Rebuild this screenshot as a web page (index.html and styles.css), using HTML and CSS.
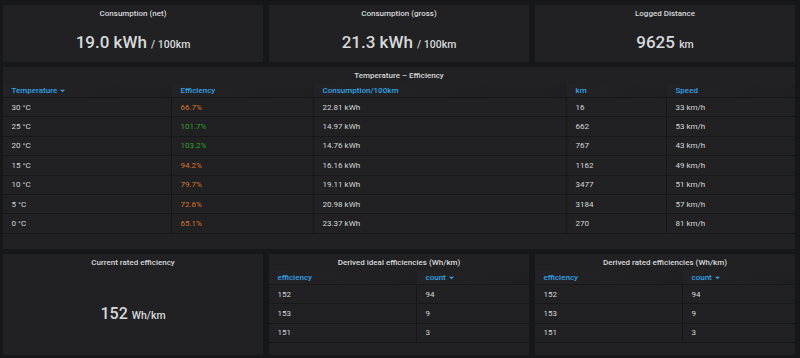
FILE: index.html
```html
<!DOCTYPE html>
<html lang="en">
<head>
<meta charset="UTF-8" />
<meta name="viewport" content="width=device-width, initial-scale=1" />
<title>Efficiency</title>
<link rel="stylesheet" href="styles.css">
</head>
<body>
  <div class="dashboard">

    <div class="panel stat-panel">
      <div class="panel-title">Consumption (net)</div>
      <div class="stat-value"><span>19.0 kWh <span class="stat-unit">/ 100km</span></span></div>
    </div>

    <div class="panel stat-panel">
      <div class="panel-title">Consumption (gross)</div>
      <div class="stat-value"><span>21.3 kWh <span class="stat-unit">/ 100km</span></span></div>
    </div>

    <div class="panel stat-panel">
      <div class="panel-title">Logged Distance</div>
      <div class="stat-value"><span>9625 <span class="stat-unit">km</span></span></div>
    </div>

    <div class="panel table-panel wide">
      <div class="panel-title">Temperature – Efficiency</div>
      <table class="data-table temp-table">
        <colgroup>
          <col style="width: 169px">
          <col style="width: 142px">
          <col style="width: 253px">
          <col style="width: 100px">
          <col>
        </colgroup>
        <thead>
          <tr>
            <th>Temperature <svg class="caret" viewBox="0 0 6 4"><path d="M0 0.5h6L3 3.5z"/></svg></th>
            <th>Efficiency</th>
            <th>Consumption/100km</th>
            <th>km</th>
            <th>Speed</th>
          </tr>
        </thead>
        <tbody>
          <tr><td>30 °C</td><td class="warn">66.7%</td><td>22.81 kWh</td><td>16</td><td>33 km/h</td></tr>
          <tr><td>25 °C</td><td class="ok">101.7%</td><td>14.97 kWh</td><td>662</td><td>53 km/h</td></tr>
          <tr><td>20 °C</td><td class="ok">103.2%</td><td>14.76 kWh</td><td>767</td><td>43 km/h</td></tr>
          <tr><td>15 °C</td><td class="warn">94.2%</td><td>16.16 kWh</td><td>1162</td><td>49 km/h</td></tr>
          <tr><td>10 °C</td><td class="warn">79.7%</td><td>19.11 kWh</td><td>3477</td><td>51 km/h</td></tr>
          <tr><td>5 °C</td><td class="warn">72.6%</td><td>20.98 kWh</td><td>3184</td><td>57 km/h</td></tr>
          <tr><td>0 °C</td><td class="warn">65.1%</td><td>23.37 kWh</td><td>270</td><td>81 km/h</td></tr>
        </tbody>
      </table>
    </div>

    <div class="panel stat-panel">
      <div class="panel-title">Current rated efficiency</div>
      <div class="stat-value small"><span>152 <span class="stat-unit">Wh/km</span></span></div>
    </div>

    <div class="panel table-panel">
      <div class="panel-title">Derived ideal efficiencies (Wh/km)</div>
      <table class="data-table">
        <colgroup>
          <col style="width: 148px">
          <col>
        </colgroup>
        <thead>
          <tr>
            <th>efficiency</th>
            <th>count <svg class="caret" viewBox="0 0 6 4"><path d="M0 0.5h6L3 3.5z"/></svg></th>
          </tr>
        </thead>
        <tbody>
          <tr><td>152</td><td>94</td></tr>
          <tr><td>153</td><td>9</td></tr>
          <tr><td>151</td><td>3</td></tr>
        </tbody>
      </table>
    </div>

    <div class="panel table-panel">
      <div class="panel-title">Derived rated efficiencies (Wh/km)</div>
      <table class="data-table">
        <colgroup>
          <col style="width: 148px">
          <col>
        </colgroup>
        <thead>
          <tr>
            <th>efficiency</th>
            <th>count <svg class="caret" viewBox="0 0 6 4"><path d="M0 0.5h6L3 3.5z"/></svg></th>
          </tr>
        </thead>
        <tbody>
          <tr><td>152</td><td>94</td></tr>
          <tr><td>153</td><td>9</td></tr>
          <tr><td>151</td><td>3</td></tr>
        </tbody>
      </table>
    </div>

  </div>
</body>
</html>
```

FILE: styles.css
```css
body {
  background-color: #161719;
  color: #d8d9da;
  font-family: Roboto, 'Liberation Sans', sans-serif;
  margin: 0;
  padding: 5px 5px 0 3px;
}
.dashboard {
  display: grid;
  grid-template-columns: repeat(3, 1fr);
  grid-template-rows: 57px 182px 101px;
  column-gap: 6px;
  row-gap: 5px;
}
.panel {
  background-color: #212124;
  display: flex;
  flex-direction: column;
  overflow: hidden;
}
.wide {
  grid-column: 1 / 4;
}
.panel-title {
  height: 17px;
  line-height: 17px;
  flex-shrink: 0;
  text-align: center;
  font-size: 8px;
  font-weight: 500;
  color: #d8d9da;
}
.stat-value {
  flex: 1;
  display: flex;
  align-items: center;
  justify-content: center;
  font-size: 17px;
  font-weight: 500;
  white-space: nowrap;
}
.stat-value.small {
  font-size: 16px;
}
.stat-unit {
  font-size: 10.5px;
  font-weight: 500;
}
.data-table {
  width: 100%;
  table-layout: fixed;
  border-collapse: separate;
  border-spacing: 0;
  font-size: 8px;
}
.data-table th {
  height: 13px;
  padding: 0 8.5px;
  text-align: left;
  font-weight: 500;
  color: #33a2e5;
  background: linear-gradient(135deg, #232327, #1f1f21);
  border-bottom: 1px solid #161719;
  white-space: nowrap;
}
.data-table td {
  height: 18.4px;
  padding: 0 8.5px;
  border-bottom: 1px solid #161719;
  border-right: 1px solid #161719;
  white-space: nowrap;
}
.data-table td:last-child {
  border-right: none;
}
.caret {
  width: 5px;
  height: 4px;
  fill: #33a2e5;
  vertical-align: 0;
  margin-left: 1px;
}
.warn {
  color: rgba(237, 129, 40, 0.89);
}
.ok {
  color: rgba(50, 172, 45, 0.97);
}
```
